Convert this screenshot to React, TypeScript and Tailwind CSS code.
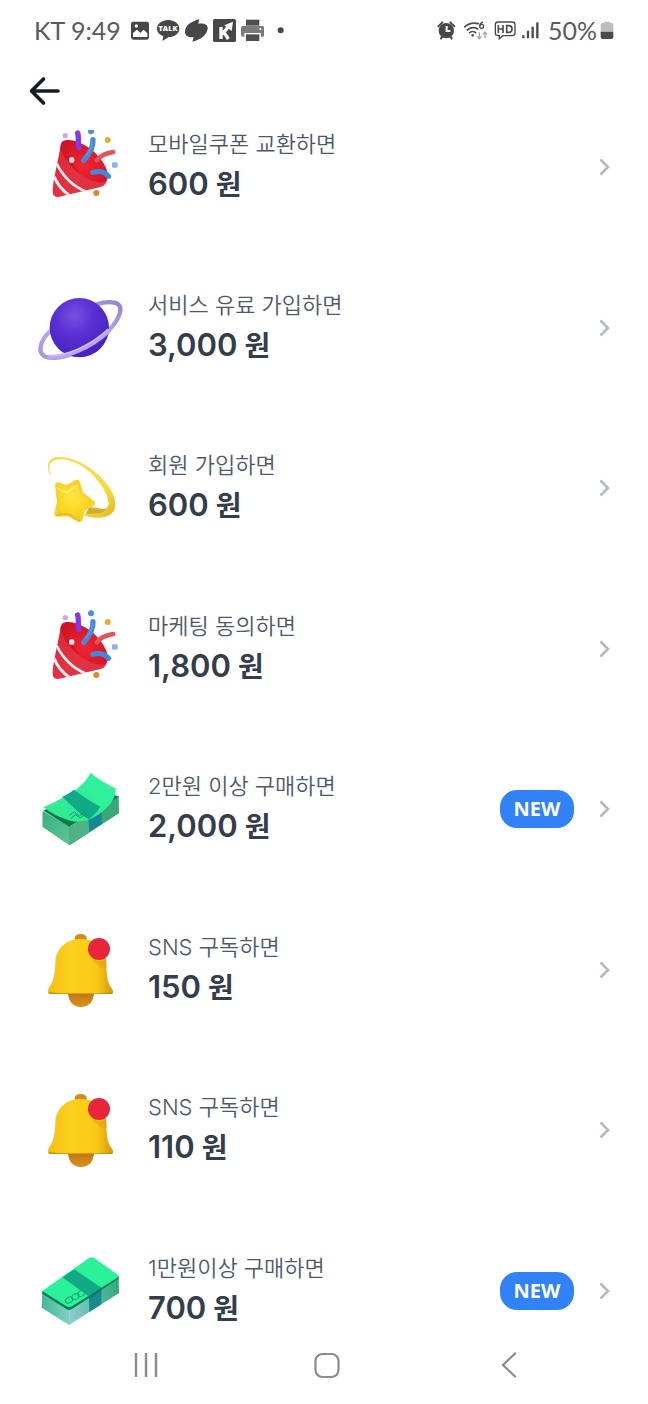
import React, { useId } from "react";

function PartyIcon() {
  const id = useId();
  return (
    <svg viewBox="18 17 270 258" className="h-[86px] w-[90px]" aria-hidden="true">
      <defs>
        <linearGradient id={id + "c"} x1="0" y1="0" x2="1" y2="1">
          <stop offset="0" stopColor="#d92637" />
          <stop offset="0.5" stopColor="#e5303f" />
          <stop offset="1" stopColor="#d4384a" />
        </linearGradient>
        <radialGradient id={id + "m"} cx="0.5" cy="0.6" r="0.6">
          <stop offset="0" stopColor="#f3242f" />
          <stop offset="1" stopColor="#cf1426" />
        </radialGradient>
        <clipPath id={id + "k"}>
          <path d="M92 80 C84 130 68 190 68 218 Q68 239 88 235 L212 206 Q234 198 230 178 Z" />
        </clipPath>
      </defs>
      <path d="M92 80 C84 130 68 190 68 218 Q68 239 88 235 L212 206 Q234 198 230 178 Z" fill={"url(#" + id + "c)"} />
      <g clipPath={"url(#" + id + "k)"} fill="none" stroke="#fbeef0">
        <path d="M80 136 C98 172 128 204 168 220" strokeWidth="8" />
        <path d="M72 174 C82 198 98 218 120 232" strokeWidth="9" />
      </g>
      <path d="M98 69 C116 58 158 70 192 100 C222 128 242 166 230 186 C216 204 166 186 130 150 C98 118 82 84 98 69 Z" fill={"url(#" + id + "m)"} />
      <path d="M108 112 C110 130 130 152 150 166 C138 150 126 138 122 116 Z" fill="#b80f22" opacity="0.5" />
      <g fill="none" strokeLinecap="round">
        <path d="M143 44 C148 58 142 72 147 88" stroke="#8439e6" strokeWidth="16" />
        <path d="M189 64 C190 88 178 108 161 126" stroke="#4689dc" strokeWidth="16" />
        <path d="M200 126 C212 110 232 104 250 101" stroke="#e2545a" strokeWidth="13" />
        <path d="M188 162 C210 156 226 162 236 174" stroke="#4089dd" strokeWidth="15" />
        <path d="M186 70 C186 86 178 100 168 112" stroke="#69a8ed" strokeWidth="3" />
      </g>
      <circle cx="106" cy="52" r="8" fill="#d0a5e6" />
      <circle cx="183" cy="39" r="9" fill="#4a91d8" />
      <circle cx="233" cy="65" r="9" fill="#e4ae35" />
      <circle cx="199" cy="224" r="9" fill="#d58d22" />
      <rect x="246" y="132" width="17" height="16" rx="4" fill="#86b6e9" />
      <rect x="117" y="117" width="16" height="16" rx="5" fill="#fbe3e8" />
    </svg>
  );
}

function PlanetIcon() {
  const id = useId();
  return (
    <svg viewBox="18 -1 270 258" className="h-[86px] w-[90px]" aria-hidden="true">
      <defs>
        <radialGradient id={id + "p"} cx="0.42" cy="0.3" r="0.72">
          <stop offset="0" stopColor="#7651e0" />
          <stop offset="0.45" stopColor="#5a2fd4" />
          <stop offset="1" stopColor="#4720bd" />
        </radialGradient>
        <linearGradient id={id + "r"} x1="0" y1="1" x2="1" y2="0">
          <stop offset="0" stopColor="#a794dc" />
          <stop offset="0.5" stopColor="#c5b8ec" />
          <stop offset="1" stopColor="#9384cb" />
        </linearGradient>
      </defs>
      <path d="M64 134 C30 164 20 202 46 214 C90 230 184 190 236 136 C280 88 282 52 246 51 C230 49 212 53 194 60" fill="none" stroke={"url(#" + id + "r)"} strokeWidth="13" />
      <circle cx="148" cy="127" r="89" fill={"url(#" + id + "p)"} />
      <path d="M52 215 C104 220 184 186 238 134" fill="none" stroke="#b9a8e9" strokeWidth="14" />
      <path d="M56 211 C108 214 180 182 236 132" fill="none" stroke="#d3c7f4" strokeWidth="3" />
    </svg>
  );
}

function StarIcon() {
  const id = useId();
  return (
    <svg viewBox="18 0 270 258" className="h-[86px] w-[90px]" aria-hidden="true">
      <defs>
        <radialGradient id={id + "s"} cx="0.45" cy="0.4" r="0.6">
          <stop offset="0" stopColor="#ffe640" />
          <stop offset="0.65" stopColor="#fbd725" />
          <stop offset="1" stopColor="#f4cb2a" />
        </radialGradient>
        <linearGradient id={id + "t"} x1="0" y1="0" x2="1" y2="1">
          <stop offset="0" stopColor="#f6dc55" />
          <stop offset="0.7" stopColor="#f6dc3c" />
          <stop offset="1" stopColor="#e1b52f" />
        </linearGradient>
      </defs>
      <path d="M60 92 C46 60 56 38 82 36 C132 32 196 72 230 116 C258 152 266 190 242 208 C224 222 192 220 162 212 L178 188 C208 198 236 196 236 174 C234 150 212 112 180 82 C146 50 100 38 78 44 C58 48 54 66 62 90 Z" fill={"url(#" + id + "t)"} />
      <path d="M176 188 C192 184 208 190 226 193 C222 204 202 208 168 206 Z" fill="#cd9c26" opacity="0.75" />
      <path d="M84 121 L112 130 L141 113 L151 147 L186 175 L156 192 L149 222 L118 205 L82 206 L90 170 Z" fill="#f8d326" stroke="#f8d326" strokeWidth="18" strokeLinejoin="round" />
      <path d="M84 121 L112 130 L141 113 L151 147 L186 175 L156 192 L149 222 L118 205 L82 206 L90 170 Z" fill={"url(#" + id + "s)"} />
      <path d="M86 132 Q106 146 118 138 Q130 126 140 124" fill="none" stroke="#fff17a" strokeWidth="7" strokeLinecap="round" opacity="0.7" />
      <path d="M80 210 Q108 204 122 211 Q138 224 148 227" fill="none" stroke="#d9a52c" strokeWidth="5" strokeLinecap="round" opacity="0.6" />
    </svg>
  );
}

function CurledCashIcon() {
  const id = useId();
  return (
    <svg viewBox="18 4 270 258" className="h-[86px] w-[90px]" aria-hidden="true">
      <defs>
        <linearGradient id={id + "l"} x1="0" y1="0" x2="1" y2="1">
          <stop offset="0" stopColor="#35b27e" />
          <stop offset="1" stopColor="#62c39b" />
        </linearGradient>
        <linearGradient id={id + "t"} x1="0" y1="1" x2="1" y2="0">
          <stop offset="0" stopColor="#31e894" />
          <stop offset="1" stopColor="#31f39e" />
        </linearGradient>
      </defs>
      <path d="M38 140 L120 186 L266 94 L267 146 L119 242 L38 186 Z" fill="#39a777" />
      <path d="M38 140 L118 188 L119 242 L38 186 Z" fill={"url(#" + id + "l)"} />
      <path d="M118 188 L175 154 L178 202 L119 242 Z" fill="#4db284" />
      <path d="M175 154 L214 126 L216 177 L178 202 Z" fill="#158894" />
      <path d="M40 138 L118 186 L266 96 L228 80 L112 100 Z" fill="#087b4d" />
      <path d="M182 24 C208 46 234 60 257 71 C260 100 236 130 204 150 C178 168 150 176 122 168 C88 160 62 144 40 128 C68 116 92 104 110 92 C144 74 168 50 182 24 Z" fill={"url(#" + id + "t)"} />
      <path d="M96 96 C110 90 124 82 131 75 C156 92 182 110 211 126 C200 144 188 156 176 164 C142 144 120 116 96 96 Z" fill="#11aa86" />
      <path d="M118 152 l15 -10 l15 12 l15 -12 l12 12 M122 162 l14 -12 l14 10 l16 -12" fill="none" stroke="#139b74" strokeWidth="3" />
    </svg>
  );
}

function FlatCashIcon() {
  const id = useId();
  return (
    <svg viewBox="18 9 270 258" className="h-[86px] w-[90px]" aria-hidden="true">
      <defs>
        <linearGradient id={id + "l"} x1="0" y1="0" x2="1" y2="0">
          <stop offset="0" stopColor="#41b898" />
          <stop offset="1" stopColor="#82d0c4" />
        </linearGradient>
        <linearGradient id={id + "r"} x1="0" y1="0" x2="1" y2="0">
          <stop offset="0" stopColor="#8bced0" />
          <stop offset="1" stopColor="#31a980" />
        </linearGradient>
      </defs>
      <path d="M37 140 L118 190 L117 240 L35 188 Z" fill={"url(#" + id + "l)"} />
      <path d="M118 190 L266 94 L267 144 L117 240 Z" fill={"url(#" + id + "r)"} />
      <path d="M177 152 L214 128 L214 178 L178 201 Z" fill="#178a8d" />
      <path d="M37 138 L37 146 L110 193 Q118 197 126 192 L265 102 L266 94 Z" fill="#07804f" />
      <path d="M37 138 L177 39 Q185 34 193 39 L264 90 Q267 94 262 98 L126 184 Q116 189 108 183 Z" fill="#2df09a" />
      <path d="M97 97 L133 73 L214 128 L176 154 Z" fill="#11aa84" />
      <path d="M176 154 L214 128 L214 136 L177 162 Z" fill="#0b7770" />
      <g fill="none" stroke="#11a873" strokeWidth="3">
        <ellipse cx="118" cy="165" rx="12" ry="8" transform="rotate(-32 118 165)" />
        <ellipse cx="136" cy="155" rx="12" ry="8" transform="rotate(-32 136 155)" />
        <ellipse cx="154" cy="145" rx="12" ry="8" transform="rotate(-32 154 145)" />
      </g>
    </svg>
  );
}

function BellIcon() {
  const id = useId();
  return (
    <svg viewBox="18 6 270 258" className="h-[86px] w-[90px]" aria-hidden="true">
      <defs>
        <linearGradient id={id + "b"} x1="0" y1="0" x2="1" y2="0">
          <stop offset="0" stopColor="#f5bd14" />
          <stop offset="0.35" stopColor="#fbd21e" />
          <stop offset="0.75" stopColor="#f8ca18" />
          <stop offset="1" stopColor="#d9950f" />
        </linearGradient>
        <linearGradient id={id + "c"} x1="0" y1="0" x2="0" y2="1">
          <stop offset="0" stopColor="#bd7312" />
          <stop offset="1" stopColor="#d99320" />
        </linearGradient>
      </defs>
      <path d="M134 48 V38 Q136 27 152 27 Q168 27 170 38 V48 Z" fill="#cf8d20" />
      <path d="M114 200 H192 C192 230 176 246 153 246 C130 246 114 230 114 200 Z" fill={"url(#" + id + "c)"} />
      <path d="M152 42 C104 42 78 74 76 112 C75 146 72 166 58 187 C54 194 54 199 54 202 Q54 207 61 207 H243 Q250 207 249 201 Q249 194 242 186 C230 168 230 146 229 112 C227 72 198 42 152 42 Z" fill={"url(#" + id + "b)"} />
      <path d="M55 200 Q56 207 62 207 H242 Q249 207 249 200 Q236 205 152 205 Q70 205 55 200 Z" fill="#cf8c13" />
      <path d="M176 90 Q190 116 228 104 L230 128 Q204 132 176 90 Z" fill="#dfa012" opacity="0.55" />
      <circle cx="207" cy="72" r="33" fill="#e8253a" />
    </svg>
  );
}

function ChevronIcon() {
  return (
    <svg viewBox="0 0 24 24" className="size-6 shrink-0" fill="none" stroke="#b4b8c0" strokeWidth="2.6" aria-hidden="true">
      <path d="M8.500 4.500 L16 12 L8.500 19.500" />
    </svg>
  );
}

/* Status bar glyphs */

function PictureGlyph() {
  return (
    <svg viewBox="324 28 69 69" className="size-[23px]" aria-hidden="true">
      <rect x="330" y="36" width="54" height="54" rx="7" fill="#474747" />
      <circle cx="346" cy="49" r="5" fill="#fff" />
      <path d="M336 82 V70 L348 60 L358 70 L368 60 L379 71 V82 Z" fill="#fff" />
    </svg>
  );
}

function TalkGlyph() {
  return (
    <svg viewBox="408 28 69 69" className="size-[23px]" aria-hidden="true">
      <path d="M441 31 C460 31 475 42 475 57 C475 72 460 82 443 82 L424 94 L427 79 C415 75 408 67 408 57 C408 42 423 31 441 31 Z" fill="#474747" />
      <text x="441" y="65" textAnchor="middle" fontFamily="Open Sans, sans-serif" fontWeight="800" fontSize="22" fill="#fff">TALK</text>
    </svg>
  );
}

function SwirlGlyph() {
  return (
    <svg viewBox="492 28 69 69" className="size-[23px]" aria-hidden="true">
      <path d="M535 29 L532 42 C552 40 561 46 560 57 C557 75 541 89 514 96 L518 83 C500 84 491 77 492 65 C493 48 510 35 535 29 Z" fill="#474747" />
    </svg>
  );
}

function KGlyph() {
  return (
    <svg viewBox="576 28 69 69" className="size-[23px]" aria-hidden="true">
      <rect x="576" y="28" width="69" height="69" rx="5" fill="#474747" />
      <path d="M600 88 V52 M603 74 L625 48 M609 68 L622 88" stroke="#fff" strokeWidth="10" fill="none" />
      <path d="M610 47 L636 36 L632 64 Z" fill="#fff" />
    </svg>
  );
}

function PrinterGlyph() {
  return (
    <svg viewBox="660 28 69 69" className="size-[23px]" aria-hidden="true">
      <rect x="675" y="30" width="40" height="18" fill="#505050" />
      <rect x="660" y="49" width="70" height="32" rx="6" fill="#7b7b7b" />
      <rect x="670" y="70" width="50" height="13" fill="#fff" />
      <rect x="675" y="74" width="40" height="20" fill="#505050" />
      <circle cx="718" cy="58" r="3" fill="#fff" />
    </svg>
  );
}

function DotGlyph() {
  return (
    <svg viewBox="744 28 69 69" className="size-[23px]" aria-hidden="true">
      <circle cx="779" cy="62" r="9" fill="#474747" />
    </svg>
  );
}

function AlarmGlyph() {
  return (
    <svg viewBox="50 28 60 66" className="h-[22px] w-[20px]" aria-hidden="true">
      <circle cx="78" cy="63" r="23" fill="#474747" />
      <path d="M54 50 L66 38 M102 50 L90 38 M62 86 L66 80 M94 86 L90 80" stroke="#474747" strokeWidth="6" strokeLinecap="round" />
      <path d="M79 49 V64 H90" stroke="#fff" strokeWidth="6" fill="none" />
    </svg>
  );
}

function WifiGlyph() {
  return (
    <svg viewBox="130 28 75 66" className="h-[22px] w-[25px]" fill="none" aria-hidden="true">
      <g stroke="#4d4d4d" strokeWidth="5" strokeLinecap="round">
        <path d="M135 52 Q152 36 176 42" />
        <path d="M143 61 Q158 49 174 58" />
        <path d="M150 69 Q159 62 168 69" />
      </g>
      <circle cx="159" cy="77" r="4" fill="#4d4d4d" />
      <circle cx="186" cy="50" r="6" stroke="#4d4d4d" strokeWidth="4" />
      <path d="M180 50 Q181 40 190 37" stroke="#4d4d4d" strokeWidth="4" />
      <path d="M179 68 V86 M173 80 L179 87 L185 80 M196 86 V68 M190 74 L196 67 L202 74" stroke="#a6a6a6" strokeWidth="4" />
    </svg>
  );
}

function HdGlyph() {
  return (
    <svg viewBox="216 28 66 66" className="size-[22px]" fill="none" stroke="#4a4a4a" aria-hidden="true">
      <path d="M228 37 H271 Q279 37 279 45 V70 Q279 78 271 78 H242 L232 87 V78 H228 Q220 78 220 70 V45 Q220 37 228 37 Z" strokeWidth="4" />
      <path d="M229 46 V70 M243 46 V70 M229 58 H243 M254 48 V68 H260 Q270 68 270 58 Q270 48 260 48 Z" strokeWidth="5" />
    </svg>
  );
}

function SignalGlyph() {
  return (
    <svg viewBox="303 28 60 66" className="h-[22px] w-[20px]" fill="none" stroke="#4a4a4a" strokeWidth="7" aria-hidden="true">
      <path d="M307 86 V77 M321 86 V63 M335 86 V51" />
      <path d="M349 86 V38" />
    </svg>
  );
}

function BatteryGlyph() {
  return (
    <svg viewBox="538 28 42 66" className="h-[22px] w-[14px]" aria-hidden="true">
      <path d="M550 36 H568 V40 H574 Q578 40 578 45 V66 H540 V45 Q540 40 545 40 H550 Z" fill="#bdbdbd" />
      <path d="M540 66 H578 V82 Q578 88 572 88 H546 Q540 88 540 82 Z" fill="#4a4a4a" />
    </svg>
  );
}

function StatusBar() {
  return (
    <div className="flex h-[60px] items-center justify-between px-[34px] font-['Lato','Liberation_Sans',sans-serif] text-[25px] leading-8 text-[#5a5a5a]">
      <div className="flex items-center gap-2">
        <span>KT 9:49</span>
        <div className="flex items-center gap-[5px]">
          <PictureGlyph />
          <TalkGlyph />
          <SwirlGlyph />
          <KGlyph />
          <PrinterGlyph />
          <DotGlyph />
        </div>
      </div>
      <div className="flex items-center gap-1.5">
        <AlarmGlyph />
        <WifiGlyph />
        <HdGlyph />
        <SignalGlyph />
        <div className="flex items-center gap-[3px]">
          <span>50%</span>
          <BatteryGlyph />
        </div>
      </div>
    </div>
  );
}

type Reward = { title: string; amount: string; icon: () => React.JSX.Element; isNew?: boolean };

const rewards: Reward[] = [
  { title: "모바일쿠폰 교환하면", amount: "600", icon: PartyIcon },
  { title: "서비스 유료 가입하면", amount: "3,000", icon: PlanetIcon },
  { title: "회원 가입하면", amount: "600", icon: StarIcon },
  { title: "마케팅 동의하면", amount: "1,800", icon: PartyIcon },
  { title: "2만원 이상 구매하면", amount: "2,000", icon: CurledCashIcon, isNew: true },
  { title: "SNS 구독하면", amount: "150", icon: BellIcon },
  { title: "SNS 구독하면", amount: "110", icon: BellIcon },
  { title: "1만원이상 구매하면", amount: "700", icon: FlatCashIcon, isNew: true },
];

function RewardRow({ title, amount, icon: Icon, isNew }: Reward) {
  return (
    <a href="#" className="flex h-[70px] items-center pr-8 pl-9">
      <Icon />
      <div className="ml-[22px] min-w-0 flex-1 pt-[3px]">
        <p className="text-[22px] leading-6 font-[350] text-[#4e5968]">{title}</p>
        <p className="mt-2 text-[31px] leading-10 font-semibold text-[#333d4b]">
          {amount}
          <span className="text-[28px]"> 원</span>
        </p>
      </div>
      {isNew && (
        <span className="mr-[18px] flex h-[38px] w-[74px] items-center justify-center rounded-[17px] bg-[#3182f6] font-['Open_Sans','Noto_Sans',sans-serif] text-xl font-bold text-white">
          NEW
        </span>
      )}
      <ChevronIcon />
    </a>
  );
}

export default function App() {
  return (
    <div className="flex min-h-screen flex-col bg-white font-['Inter','Noto_Sans_CJK_KR',sans-serif]">
      <StatusBar />
      <header className="mb-2 flex h-[62px] items-center px-7">
        <button type="button" aria-label="뒤로" className="flex size-[34px] items-center justify-center">
          <svg viewBox="0 0 34 34" className="size-[34px]" fill="none" stroke="#161d29" strokeWidth="3.600" strokeLinecap="round" strokeLinejoin="round" aria-hidden="true">
            <path d="M30 17 H3.500 M15.500 5 L3.500 17 L15.500 29" />
          </svg>
        </button>
      </header>
      <main className="flex flex-1 flex-col overflow-hidden pt-0.5">
        <ul className="flex flex-1 flex-col justify-between gap-12">
          {rewards.map((reward, index) => (
            <li key={index}>
              <RewardRow {...reward} />
            </li>
          ))}
        </ul>
      </main>
      <nav className="grid h-[78px] grid-cols-3 items-center pr-12 pl-[55px]">
        <button type="button" aria-label="최근 앱" className="flex justify-center">
          <svg viewBox="0 0 28 28" className="size-7" stroke="#8b8b8b" strokeWidth="2.4" aria-hidden="true">
            <path d="M4 2 V26 M14 2 V26 M24 2 V26" />
          </svg>
        </button>
        <button type="button" aria-label="홈" className="flex justify-center">
          <svg viewBox="0 0 28 28" className="size-7" fill="none" stroke="#8b8b8b" strokeWidth="2.2" aria-hidden="true">
            <rect x="2.500" y="3" width="23" height="23" rx="7" />
          </svg>
        </button>
        <button type="button" aria-label="이전" className="flex justify-center">
          <svg viewBox="0 0 28 28" className="size-7" fill="none" stroke="#8b8b8b" strokeWidth="2.2" strokeLinecap="round" aria-hidden="true">
            <path d="M20 2.500 L8 14 L20 25.500" />
          </svg>
        </button>
      </nav>
    </div>
  );
}
